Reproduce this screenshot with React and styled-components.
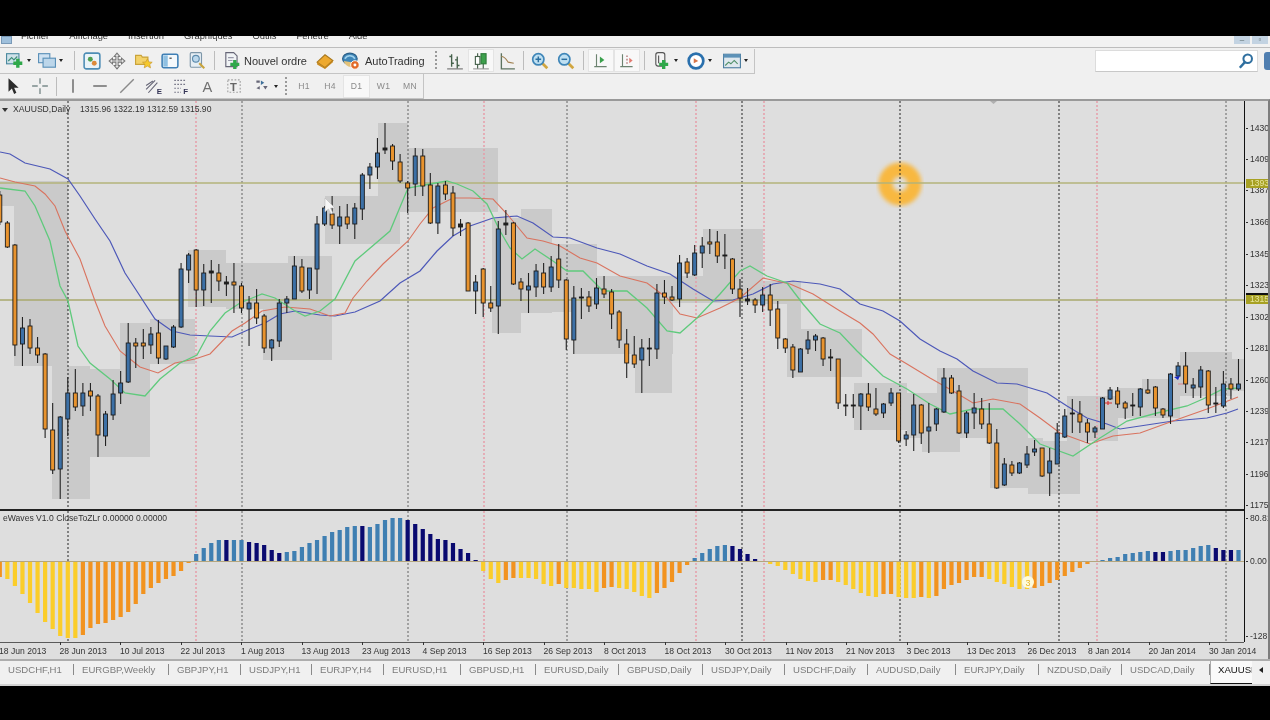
import React from "react";
import styled, { createGlobalStyle } from "styled-components";

// chart data, all in pixels of the chart

// [bodyTop, bodyBottom, wickTop, wickBottom, kind]
const candles = [
  [194,221,190,224,"o"],[222,246,220,247,"o"],[244,344,243,355,"o"],[327,343,316,365,"b"],[325,347,318,353,"o"],
  [347,354,336,362,"o"],[353,428,352,437,"o"],[429,469,402,473,"o"],[416,468,415,498,"b"],[392,418,376,435,"b"],
  [392,406,368,410,"o"],[392,405,382,415,"b"],[390,395,382,410,"o"],[395,434,393,456,"o"],[413,435,410,445,"b"],
  [393,414,379,419,"b"],[382,392,370,403,"b"],[342,381,322,382,"b"],[342,345,337,367,"o"],[342,345,328,358,"o"],
  [333,344,326,353,"b"],[332,357,319,363,"o"],[345,358,345,359,"b"],[326,346,324,347,"b"],[268,326,262,327,"b"],
  [254,269,252,282,"b"],[249,289,248,306,"o"],[272,289,263,305,"b"],[270,272,259,302,"d"],[272,280,263,290,"o"],
  [281,283,275,295,"d"],[281,284,262,312,"o"],[285,307,282,312,"o"],[302,308,295,345,"b"],[302,317,288,323,"o"],
  [315,347,313,352,"o"],[339,347,338,360,"b"],[302,340,298,346,"b"],[298,302,295,312,"b"],[265,298,255,298,"b"],
  [266,290,258,292,"o"],[267,289,267,298,"b"],[223,268,215,293,"b"],[207,223,205,225,"b"],[213,224,195,228,"o"],
  [216,225,205,243,"b"],[216,223,203,228,"o"],[207,223,202,238,"b"],[174,208,172,219,"b"],[166,174,162,188,"b"],
  [152,166,137,178,"b"],[147,149,122,153,"d"],[145,160,143,169,"o"],[161,180,153,182,"o"],[182,187,180,212,"o"],
  [155,183,147,195,"b"],[155,185,148,195,"o"],[184,222,172,223,"o"],[185,222,182,233,"b"],[184,193,180,199,"o"],
  [192,227,185,235,"o"],[223,226,218,235,"d"],[222,290,221,290,"o"],[281,290,274,313,"b"],[268,302,267,316,"o"],
  [302,307,285,311,"o"],[228,305,220,333,"b"],[222,224,209,234,"d"],[222,283,221,284,"o"],[281,288,277,300,"o"],
  [285,289,272,312,"b"],[270,286,263,296,"b"],[272,286,262,293,"o"],[266,286,255,291,"b"],[258,279,243,287,"o"],
  [279,338,278,349,"o"],[297,339,285,353,"b"],[296,297,287,318,"d"],[296,305,290,311,"o"],[287,303,277,308,"b"],
  [288,293,275,297,"o"],[291,313,288,328,"o"],[311,339,309,347,"o"],[343,362,328,377,"o"],[354,363,335,367,"o"],
  [347,359,338,392,"b"],[347,348,337,365,"d"],[292,348,283,358,"b"],[292,296,279,303,"o"],[296,299,285,300,"o"],
  [262,298,254,306,"b"],[261,272,257,277,"o"],[252,274,244,275,"b"],[245,252,236,267,"b"],[241,243,228,253,"o"],
  [241,255,230,262,"o"],[254,255,233,268,"d"],[258,288,257,293,"o"],[288,297,278,316,"o"],[298,300,287,304,"d"],
  [299,304,297,312,"o"],[294,304,286,311,"b"],[294,309,283,325,"o"],[308,337,300,348,"o"],[338,347,337,352,"o"],
  [346,369,343,377,"o"],[348,371,347,371,"b"],[339,348,330,353,"b"],[335,339,333,350,"b"],[337,358,336,365,"o"],
  [356,357,348,370,"d"],[358,402,358,408,"o"],[404,405,393,415,"d"],[404,405,393,417,"d"],[393,405,392,429,"b"],
  [393,406,382,410,"o"],[408,413,387,415,"o"],[403,412,402,417,"b"],[392,402,387,405,"b"],[392,440,392,442,"o"],
  [434,438,430,445,"b"],[404,434,393,450,"b"],[404,432,403,443,"o"],[426,430,402,452,"b"],[408,423,407,430,"b"],
  [377,411,367,412,"b"],[377,392,374,393,"o"],[390,432,384,433,"o"],[412,432,410,437,"b"],[407,412,392,428,"b"],
  [408,423,397,428,"o"],[423,442,402,443,"o"],[442,487,428,488,"o"],[463,484,457,485,"b"],[464,472,460,475,"o"],
  [462,472,461,473,"b"],[453,464,445,467,"b"],[448,451,439,455,"b"],[447,475,447,476,"o"],[460,472,447,495,"b"],
  [432,463,422,463,"b"],[415,436,408,437,"b"],[412,413,398,432,"d"],[413,421,400,432,"o"],[422,431,418,442,"o"],
  [427,431,425,437,"b"],[397,428,396,428,"b"],[389,398,386,399,"b"],[390,403,386,407,"o"],[402,407,400,418,"o"],
  [404,405,392,415,"d"],[388,406,387,415,"b"],[389,392,378,393,"o"],[386,407,385,415,"o"],[408,414,407,417,"o"],
  [373,415,372,423,"b"],[365,375,361,377,"b"],[365,383,351,392,"o"],[384,387,377,397,"b"],[369,386,365,397,"b"],
  [370,404,369,412,"o"],[402,403,386,412,"d"],[383,405,370,407,"b"],[383,388,377,398,"o"],[383,388,358,390,"b"],
];

const barX = (i) => -0.2 + 7.553 * i;

const blueLine = "0,151 10,153 25,162 50,168 68,178 80,195 95,218 110,240 125,272 140,295 155,318 172,330 190,334 210,335 232,336 250,328 265,322 280,313 295,310 320,314 335,315 355,311 380,300 400,282 420,270 437,250 453,235 470,225 493,217 517,215 533,222 553,236 570,237 597,247 620,253 647,265 670,273 693,288 713,300 733,299 753,293 773,283 793,280 820,283 840,288 860,303 883,310 900,320 920,338 940,350 957,358 973,370 997,382 1017,383 1047,392 1067,405 1087,417 1107,423 1120,428 1140,425 1173,420 1207,417 1227,412 1238,408";
const redLine = "0,177 15,181 35,185 45,193 55,205 65,230 80,258 95,300 105,325 120,350 140,366 158,372 175,362 195,358 210,353 232,330 245,322 262,310 285,306 310,308 330,315 345,312 353,297 367,280 383,263 408,240 420,223 433,207 453,197 470,197 493,198 507,213 527,237 543,240 560,245 580,257 597,262 620,275 647,282 667,297 680,313 697,317 720,307 740,297 763,277 790,283 813,293 840,310 860,322 873,333 890,353 907,363 930,377 953,390 973,402 993,398 1020,403 1040,417 1060,432 1090,443 1113,435 1140,432 1173,420 1207,408 1238,396";
const greenLine = "0,187 25,190 35,205 50,240 60,285 68,300 78,345 90,362 110,378 125,392 145,395 160,378 180,362 197,354 210,330 225,312 240,302 262,293 275,297 295,310 305,315 320,310 335,298 355,260 390,230 408,187 430,183 447,180 457,183 473,190 487,203 500,230 510,247 522,258 535,248 553,260 567,270 583,270 603,290 627,290 647,307 667,330 680,332 697,317 720,293 740,270 750,265 767,275 787,282 803,303 820,323 840,332 857,350 883,375 907,388 930,403 950,413 973,408 1003,408 1020,423 1040,443 1073,455 1100,437 1127,420 1157,412 1187,405 1203,398 1223,388 1240,387";

const zones = [
  [0,180,14,205],[14,180,68,365],[52,365,90,498],[68,368,150,456],[120,322,150,368],[150,318,195,363],
  [188,249,226,306],[226,262,290,308],[263,308,332,359],[288,255,332,310],[325,195,400,243],[378,122,408,195],
  [400,195,408,211],[408,147,498,211],[492,217,521,332],[521,208,552,312],[552,243,597,311],[575,310,623,353],
  [597,275,673,325],[623,325,673,353],[635,353,672,392],[672,275,703,302],[703,228,763,302],[763,280,787,303],
  [787,280,801,328],[787,328,862,376],[854,382,907,429],[907,392,937,437],[922,392,960,451],[937,367,1028,437],
  [990,437,1043,487],[1028,440,1080,493],[1067,395,1118,440],[1118,387,1142,417],[1142,378,1180,417],
  [1180,351,1232,395],[1232,358,1244,390],
];

const blackGrid = [[68,0.9],[242,0.6],[408,0.6],[567,0.6],[742,0.9],[900,0.9],[1059,0.9],[1226,0.6]];
const redGrid = [196,484,696,764,1097];

// one bar per candle: [y, colour]
const Y = "#fbcd2a", O = "#f2931f", B = "#3f7fb2", N = "#0a0a70";
const histogram = [
  [576,O],[578,Y],[585,Y],[593,Y],[602,Y],[612,Y],[621,Y],[628,Y],[635,Y],[637,Y],[637,Y],[634,O],[627,O],[623,O],[622,O],
  [619,O],[616,O],[611,O],[603,O],[593,O],[587,O],[582,O],[578,O],[575,O],[570,O],[562,O],
  [553,B],[547,B],[542,B],[539,B],[539,N],[539,B],[539,B],[541,N],[542,N],[544,N],[549,N],[552,N],[551,B],[550,B],[546,B],
  [542,B],[539,B],[535,B],[531,B],[529,B],[526,B],[525,B],[525,N],[526,B],[523,B],[519,B],[517,B],[517,B],[519,N],[523,N],
  [528,N],[533,N],[538,N],[539,N],[542,N],[548,N],[552,N],[559,N],
  [570,Y],[578,Y],[582,Y],[579,O],[577,O],[577,Y],[577,Y],[578,Y],[583,Y],[585,Y],[583,O],[587,Y],[587,Y],[588,Y],[588,Y],
  [591,Y],[587,O],[586,O],[587,Y],[588,Y],[591,Y],[595,Y],[597,Y],[592,O],[587,O],[581,O],[572,O],[564,O],
  [557,B],[552,B],[548,B],[545,B],[544,B],[545,N],[548,N],[553,N],[558,N],
  [560,Y],[563,Y],[565,Y],[569,Y],[573,Y],[578,Y],[580,Y],[581,Y],[579,O],[579,O],[581,Y],[584,Y],[588,Y],[592,Y],[595,Y],
  [596,Y],[593,O],[593,O],[596,Y],[597,Y],[597,Y],[596,O],[597,Y],[595,O],[588,O],[584,O],[582,O],[579,O],[576,O],[576,O],
  [578,Y],[581,Y],[583,Y],[586,Y],[588,Y],[588,Y],[587,O],[585,O],[582,O],[579,O],[575,O],[571,O],[567,O],[563,O],[561,O],
  [559,B],[557,B],[556,B],[553,B],[552,B],[551,B],[550,B],[551,N],[551,N],[550,B],[549,B],[549,B],[547,B],[545,B],[544,B],
  [547,N],[549,N],[549,N],[549,B],
];

const prices = [
  ["1430.55",127],["1409.15",158],["1387.75",189],["1366.35",221],["1345.00",253],["1323.60",284],["1302.20",316],
  ["1281.00",347],["1260.00",379],["1239.00",410],["1217.60",441],["1196.20",473],["1175.00",504],
];

const dates = ["18 Jun 2013","28 Jun 2013","10 Jul 2013","22 Jul 2013","1 Aug 2013","13 Aug 2013","23 Aug 2013","4 Sep 2013","16 Sep 2013","26 Sep 2013","8 Oct 2013","18 Oct 2013","30 Oct 2013","11 Nov 2013","21 Nov 2013","3 Dec 2013","13 Dec 2013","26 Dec 2013","8 Jan 2014","20 Jan 2014","30 Jan 2014"];

const tabs = [
  ["USDCHF,H1",74],["EURGBP,Weekly",95],["GBPJPY,H1",72],["USDJPY,H1",71],["EURJPY,H4",72],["EURUSD,H1",77],["GBPUSD,H1",75],
  ["EURUSD,Daily",83],["GBPUSD,Daily",84],["USDJPY,Daily",82],["USDCHF,Daily",83],["AUDUSD,Daily",88],["EURJPY,Daily",83],
  ["NZDUSD,Daily",83],["USDCAD,Daily",88],
];

const menus = ["Fichier","Affichage","Insertion","Graphiques","Outils","Fenêtre","Aide"];

// global

const GlobalStyle = createGlobalStyle`
  html, body { margin: 0; padding: 0; background: #000; }
`;

const Screen = styled.div`
  width: 1270px;
  height: 720px;
  background: #000;
  display: flex;
  flex-direction: column;
  overflow: hidden;
  font-family: "Liberation Sans", Arial, sans-serif;
`;

const Terminal = styled.div`
  margin-top: 36px;
  height: 649px;
  display: flex;
  flex-direction: column;
  background: #f0f0f0;
  filter: blur(0.5px);
`;

// menu

const MenuBar = styled.div`
  height: 11px;
  flex: none;
  display: flex;
  align-items: flex-end;
  overflow: hidden;
  background: #f2f2f2;
  border-bottom: 1px solid #bdbdbd;
  padding-left: 21px;
  gap: 20px;
  position: relative;
`;

const MenuItem = styled.span`
  font-size: 9.4px;
  line-height: 12px;
  margin-bottom: 5px;
  color: #333;
`;

const AppBadge = styled.i`
  position: absolute;
  left: 1px;
  top: 0;
  width: 9px;
  height: 6px;
  background: #9fc0dc;
  border: 1px solid #7a9ab8;
`;

const WinControls = styled.div`
  display: flex;
  gap: 2px;
  margin-left: auto;
  margin-right: 2px;
  align-self: flex-start;
`;

const WinButton = styled.span`
  width: 16px;
  height: 8px;
  background: #c3d3e2;
  color: #566;
  font-size: 8px;
  line-height: 8px;
  text-align: center;
`;

// toolbars

const ToolRow = styled.div`
  height: ${(p) => p.$h}px;
  flex: none;
  display: flex;
  align-items: center;
  background: #f0f0f0;
`;

const ToolGroup = styled.div`
  display: flex;
  align-items: center;
  height: 24px;
  padding-left: ${(p) => p.$pad || 0}px;
  border-right: 1px solid #c4c4c4;
  border-bottom: 1px solid #c4c4c4;
`;

const ToolButton = styled.div`
  width: ${(p) => p.$w || 26}px;
  height: 23px;
  flex: none;
  display: flex;
  align-items: center;
  justify-content: ${(p) => (p.$pl !== undefined ? "flex-start" : "center")};
  padding-left: ${(p) => p.$pl || 0}px;
  box-sizing: border-box;
  background: ${(p) => (p.$active ? "#f8f8f8" : "transparent")};
  border: 1px solid ${(p) => (p.$active ? "#e4e4e4" : "transparent")};
  color: #333;
  font-size: 11px;
  white-space: nowrap;
`;

const Period = styled(ToolButton)`
  font-size: 8.6px;
  color: #8a8a8a;
  letter-spacing: 0.3px;
`;

const Caret = styled.i`
  width: 0;
  height: 0;
  margin-left: 3px;
  border-left: 2.5px solid transparent;
  border-right: 2.5px solid transparent;
  border-top: 3px solid #222;
`;

const Sep = styled.i`
  width: 1px;
  height: 19px;
  flex: none;
  background: #bcbcbc;
  margin: 0 ${(p) => p.$m || 3}px;
`;

const Grip = styled.i`
  width: 2px;
  height: 19px;
  flex: none;
  margin: 0 ${(p) => p.$m || 3}px;
  background: repeating-linear-gradient(to bottom, #9a9a9a 0 2px, transparent 2px 4px);
`;

const Label = styled.span`
  margin-left: ${(p) => p.$ml}px;
`;

const SearchBox = styled.div`
  margin-left: auto;
  width: 163px;
  height: 22px;
  box-sizing: border-box;
  background: #fff;
  border: 1px solid #dcdcdc;
  border-bottom-color: #c8c8c8;
  display: flex;
  align-items: center;
  justify-content: flex-end;
  padding-right: 2px;
`;

const Shield = styled.i`
  width: 6px;
  height: 18px;
  margin-left: 6px;
  flex: none;
  background: #4f7eb0;
  border-radius: 3px 0 0 3px;
`;

const Ic = styled.svg.attrs({ viewBox: "0 0 16 16" })`
  width: 18px;
  height: 18px;
  flex: none;
  display: block;
`;

const Plus = ({ x = 8, y = 8 }) => (
  <path d={`M${x + 2} ${y}h3v2.5h2.5v3h-2.5v2.5h-3v-2.5h-2.5v-3h2.5z`} fill="#2fa84a" />
);

const icons = {
  newChart: (
    <>
      <rect x="0.5" y="1.5" width="11" height="9" fill="#cfe2ea" stroke="#4c8aa0" />
      <path d="M2 8l3-3 2 2 3-3" fill="none" stroke="#3f8f7a" />
      <Plus x={7} y={6} />
    </>
  ),
  profiles: (
    <>
      <rect x="0.5" y="1.5" width="10" height="8" fill="#cfe2f2" stroke="#5a90b8" />
      <rect x="4.5" y="5.5" width="11" height="8" fill="#bcd6ea" stroke="#5a90b8" />
    </>
  ),
  market: (
    <>
      <rect x="1" y="1" width="14" height="14" rx="2" fill="#eaf3f8" stroke="#4d8db5" strokeWidth="1.4" />
      <circle cx="6.5" cy="6.5" r="2.2" fill="#4fa04f" />
      <circle cx="10" cy="10" r="2.2" fill="#dc8a3a" />
    </>
  ),
  navigator: (
    <path d="M8 1l2.5 3H9v3h3V5.500l3 2.500-3 2.500V9H9v3h1.500L8 15l-2.500-3H7V9H4v1.500L1 8l3-2.500V7h3V4H5.500z" fill="#e4e4e4" stroke="#777" strokeWidth="0.9" />
  ),
  favorites: (
    <>
      <path d="M0.500 3h5l1 1.500h5V11h-11z" fill="#f3d26a" stroke="#c9a33a" />
      <path d="M11 6l1.300 2.800 3 .3-2.200 2 .7 3-2.800-1.600-2.800 1.600.7-3-2.200-2 3-.3z" fill="#f6c92c" stroke="#c8962a" strokeWidth="0.6" />
    </>
  ),
  terminal: (
    <>
      <rect x="1" y="2" width="14" height="12" rx="1.5" fill="#f4f8fb" stroke="#3f7fb5" strokeWidth="1.4" />
      <rect x="2" y="3" width="4" height="10" fill="#8fc0e2" />
      <rect x="7.500" y="5" width="2" height="1" fill="#333" />
    </>
  ),
  tester: (
    <>
      <rect x="2" y="0.500" width="10" height="13" rx="1" fill="#e6eef4" stroke="#7d96a8" />
      <circle cx="7" cy="6" r="3" fill="#bcd8ec" stroke="#5e8cad" />
      <path d="M10 10l4.500 4.500" stroke="#c9a33a" strokeWidth="1.800" />
    </>
  ),
  newOrder: (
    <>
      <path d="M2.500 0.500h7l3 3V13h-10z" fill="#f0f3f5" stroke="#667" />
      <path d="M4.500 5h5M4.500 7.500h4" stroke="#99a" />
      <Plus x={7} y={7} />
    </>
  ),
  editor: (
    <>
      <path d="M1 9l7-6.500 7 5-7 6.500z" fill="#eda92f" stroke="#a9781e" />
      <path d="M1 9v2l7 4 7-6V7.500l-7 6.500z" fill="#c98a1f" />
    </>
  ),
  autotrade: (
    <>
      <ellipse cx="7" cy="6" rx="6.500" ry="5" fill="#3f86b8" stroke="#2a5f88" />
      <path d="M2.500 6c2-3.500 7-3.500 9 0" fill="none" stroke="#9ed0ec" strokeWidth="1.400" />
      <path d="M1.500 8c1 4 5 5.500 7 5.500V9z" fill="#e3c27a" />
      <circle cx="11.500" cy="11.500" r="3.800" fill="#e26a28" stroke="#fff" strokeWidth="0.800" />
      <circle cx="11.500" cy="11.500" r="1.300" fill="#fff" />
    </>
  ),
  bars: (
    <g fill="none" strokeWidth="1.200">
      <path d="M5 2v11M3 4h2M5 10h2" stroke="#44604a" />
      <path d="M10 4v11M8 7h2M10 12h2" stroke="#44604a" />
      <path d="M1 15h14" stroke="#888" />
    </g>
  ),
  candle: (
    <g>
      <path d="M5 1v14M10 3v12" stroke="#44604a" />
      <rect x="3" y="4" width="4" height="7" fill="#fff" stroke="#44604a" />
      <rect x="8" y="1.500" width="4.500" height="9" fill="#3da04c" stroke="#2f7d3c" />
      <path d="M1 15h14" stroke="#999" />
    </g>
  ),
  line: (
    <g fill="none">
      <path d="M3 1v14h12" stroke="#5c7360" strokeWidth="1.200" />
      <path d="M3 4c3 0 4 2 6 5l5 1" stroke="#a08050" />
    </g>
  ),
  zoomIn: (
    <>
      <path d="M10 10l4.500 4.500" stroke="#d1a640" strokeWidth="2.400" />
      <circle cx="6.500" cy="6.500" r="5" fill="#bfe0f2" stroke="#3f86b8" strokeWidth="1.500" />
      <path d="M4 6.500h5M6.500 4v5" stroke="#2c6f9f" strokeWidth="1.300" />
    </>
  ),
  zoomOut: (
    <>
      <path d="M10 10l4.500 4.500" stroke="#d1a640" strokeWidth="2.400" />
      <circle cx="6.500" cy="6.500" r="5" fill="#bfe0f2" stroke="#3f86b8" strokeWidth="1.500" />
      <path d="M4 6.500h5" stroke="#2c6f9f" strokeWidth="1.300" />
    </>
  ),
  autoscroll: (
    <g>
      <path d="M4 2v11M2 13h11" stroke="#6c8370" strokeWidth="1" fill="none" />
      <path d="M7 4l4 3-4 3z" fill="#3aa04c" />
    </g>
  ),
  shift: (
    <g>
      <path d="M4 2v11M2 13h11" stroke="#6c8370" strokeWidth="1" fill="none" />
      <path d="M8 3v8" stroke="#a05a5a" strokeDasharray="1.500 1.500" />
      <path d="M10 5l3 2.500-3 2.500z" fill="#e27a70" />
    </g>
  ),
  indicators: (
    <>
      <rect x="2.500" y="0.500" width="8" height="12" rx="2" fill="#f4f4f4" stroke="#555" />
      <path d="M5 3v7" stroke="#555" />
      <Plus x={6} y={7} />
    </>
  ),
  clock: (
    <>
      <circle cx="8" cy="8" r="6.500" fill="#fff" stroke="#2a70ad" strokeWidth="2.400" />
      <path d="M6 5.500l4 2.500-4 2z" fill="#d7764a" />
    </>
  ),
  templates: (
    <>
      <rect x="0.500" y="2" width="15" height="12" fill="#dfe8ee" stroke="#4d7ea0" />
      <rect x="0.500" y="2" width="15" height="3" fill="#5d92b8" />
      <path d="M2 12l3-3 2 1.500 3-3 3 3" fill="none" stroke="#4f8f68" />
    </>
  ),
  cursor: <path d="M4 1v12l3-2.800L9 15l2-1-2-4.500h4z" fill="#2b2b2b" />,
  cross: <path d="M8 1v5M8 10v5M1 8h5M10 8h5" stroke="#7a8a8a" strokeWidth="1.200" />,
  vline: <path d="M8 2v12" stroke="#6a6a6a" strokeWidth="1.300" />,
  hline: <path d="M2 8h12" stroke="#6a6a6a" strokeWidth="1.300" />,
  trend: <path d="M2 14L14 2" stroke="#8a8a8a" strokeWidth="1.200" />,
  channel: (
    <>
      <path d="M1 11l8-8M3 14l8-9M1 7.500l6-4" stroke="#667" fill="none" />
      <text x="10.500" y="15" fontSize="7" fontWeight="700" fill="#335">E</text>
    </>
  ),
  fib: (
    <>
      <path d="M2 3h10M2 6.500h10M2 10h6M2 13.500h6" stroke="#778" strokeDasharray="1.500 1.200" />
      <text x="10" y="15.500" fontSize="7" fontWeight="700" fill="#335">F</text>
    </>
  ),
  textA: <text x="3" y="13" fontSize="13" fill="#707070">A</text>,
  textT: (
    <>
      <rect x="2.500" y="2.500" width="11" height="11" fill="none" stroke="#a0a0a0" strokeDasharray="1.500 1.500" />
      <text x="4.500" y="12" fontSize="10" fontWeight="700" fill="#666">T</text>
    </>
  ),
  arrows: (
    <>
      <path d="M3 3h3v2H3zM9 8l4 0-2 3zM3 10l3-2v3z" fill="#667" />
      <path d="M7 3l3 2-3 2z" fill="#3e6f9a" />
    </>
  ),
};

const Icon = ({ name }) => <Ic>{icons[name]}</Ic>;

// chart

const ChartArea = styled.div`
  flex: none;
  border-top: 2px solid #999;
  border-right: 2px solid #7d7d7d;
  background: #dedede;
`;

const PaneRow = styled.div`
  display: flex;
  height: ${(p) => p.$h}px;
`;

const Pane = styled.div`
  width: 1244px;
  flex: none;
  position: relative;
  overflow: hidden;
  background: #dedede;
`;

const PaneSvg = styled.svg`
  display: block;
  width: 1244px;
  height: 100%;
`;

const PaneTitle = styled.div`
  position: absolute;
  left: ${(p) => p.$l}px;
  top: ${(p) => p.$t}px;
  font-size: 8.6px;
  line-height: 11px;
  color: #333;
  white-space: pre;
`;

const Arrow = styled.i`
  position: absolute;
  left: 2px;
  top: 7px;
  width: 0;
  height: 0;
  border-left: 3px solid transparent;
  border-right: 3px solid transparent;
  border-top: 4px solid #333;
`;

const Axis = styled.div`
  flex: 1;
  position: relative;
  overflow: hidden;
  border-left: 1px solid #111;
`;

const AxisLabel = styled.span`
  position: absolute;
  left: 5px;
  font-size: 8.6px;
  line-height: 10px;
  color: #333;
  white-space: nowrap;
  &::before {
    content: "";
    position: absolute;
    left: -4px;
    top: 5px;
    width: 2px;
    height: 1px;
    background: #333;
  }
`;

const PriceTag = styled.span`
  position: absolute;
  left: 1px;
  width: 24px;
  height: 9px;
  padding-left: 4px;
  box-sizing: border-box;
  background: #a7a123;
  color: #e8e6a0;
  font-size: 8.6px;
  line-height: 9px;
  ${(p) => p.$dark && "box-shadow: 0 -2px 0 #111;"}
`;

const Divider = styled.div`
  height: 2px;
  width: 1244px;
  background: #222;
`;

const DateRow = styled.div`
  height: 17px;
  display: flex;
  box-sizing: border-box;
  overflow: hidden;
  background: linear-gradient(#5a5a5a, #5a5a5a) top left / 1244px 1px no-repeat;
`;

const DateCell = styled.span`
  flex: none;
  width: 60.5px;
  margin-left: ${(p) => (p.$first ? "-1px" : "0")};
  font-size: 8.6px;
  line-height: 18px;
  color: #333;
  white-space: nowrap;
  position: relative;
  &::before {
    content: "";
    position: absolute;
    left: 0;
    top: 0;
    width: 1px;
    height: 3px;
    background: #333;
  }
`;

// tabs

const TabBar = styled.div`
  height: 23px;
  flex: none;
  display: flex;
  align-items: stretch;
  border-top: 2px solid #adadad;
  border-bottom: 2px solid #d2d2d2;
  background: #f0f0f0;
  position: relative;
  overflow: hidden;
`;

const Tab = styled.div`
  width: ${(p) => p.$w}px;
  flex: none;
  box-sizing: border-box;
  padding-left: 8px;
  color: #7c7c7c;
  font-size: 9.6px;
  line-height: 17px;
  white-space: nowrap;
  &::after {
    content: "";
    float: right;
    width: 1px;
    height: 11px;
    margin-top: 3px;
    background: #8a8a8a;
  }
`;

const ActiveTab = styled.div`
  width: 42px;
  flex: none;
  overflow: hidden;
  padding-left: 7px;
  box-sizing: border-box;
  background: #fafafa;
  border-bottom: 1px solid #111;
  border-left: 1px solid #aaa;
  color: #111;
  font-size: 9.6px;
  line-height: 17px;
  white-space: nowrap;
`;

const TabArrow = styled.i`
  margin: 6px 0 0 7px;
  width: 0;
  height: 0;
  border-top: 3px solid transparent;
  border-bottom: 3px solid transparent;
  border-right: 4px solid #222;
`;

const GridLines = ({ y1, y2 }) => (
  <g>
    {blackGrid.map(([x, a]) => (
      <line key={x} x1={x} x2={x} y1={y1} y2={y2} stroke="#111" strokeOpacity={a} strokeDasharray="2 2" strokeWidth="1" />
    ))}
    {redGrid.map((x) => (
      <line key={x} x1={x} x2={x} y1={y1} y2={y2} stroke="#e79aa6" strokeDasharray="2 2" strokeWidth="1.400" />
    ))}
  </g>
);

const MainChart = () => (
  <PaneSvg viewBox="0 100 1244 408">
    <defs>
      <filter id="glow" x="-30%" y="-30%" width="160%" height="160%">
        <feGaussianBlur stdDeviation="2" />
      </filter>
    </defs>
    {zones.map(([a, b, c, d], i) => (
      <rect key={i} x={a} y={b} width={c - a} height={d - b} fill="#cacaca" />
    ))}
    <circle cx="900" cy="183" r="14.500" fill="none" stroke="#f8b840" strokeWidth="14" filter="url(#glow)" />
    <GridLines y1={100} y2={508} />
    <line x1="0" x2="1244" y1="182" y2="182" stroke="#b3b37a" strokeWidth="1.400" />
    <line x1="0" x2="1244" y1="299" y2="299" stroke="#a8a86c" strokeWidth="1.400" />
    <polyline points={blueLine} fill="none" stroke="#4d58b8" strokeWidth="1.200" />
    <polyline points={redLine} fill="none" stroke="#d9735f" strokeWidth="1.100" />
    <polyline points={greenLine} fill="none" stroke="#5fca7c" strokeWidth="1.300" />
    {candles.map(([t, b, h, l, k], i) => {
      const x = barX(i);
      return (
        <g key={i}>
          <line x1={x} x2={x} y1={h} y2={l} stroke="#222" strokeWidth="1.100" />
          <rect
            x={x - 2}
            y={t}
            width="4"
            height={Math.max(b - t, 1)}
            fill={k === "o" ? "#e8932e" : k === "b" ? "#3c70a6" : "#222"}
            stroke="#1b1b1b"
            strokeWidth="0.900"
          />
        </g>
      );
    })}
    <path d="M1105 402h7M1108 400v4" stroke="#d83030" strokeWidth="1.200" />
    <path d="M1174 376l6-1-2 4z" fill="#1a2ac8" />
    <path d="M1178 383h5" stroke="#d89098" strokeWidth="1.200" />
    <path d="M990 100h7l-3.500 3z" fill="#b0b0b0" />
    <path d="M325 197v14l3.500-3 2.500 5 2-1-2.500-5h4.500z" fill="#f6f6f6" stroke="#b0b0b0" strokeWidth="0.500" />
  </PaneSvg>
);

const SubChart = () => (
  <PaneSvg viewBox="0 510 1244 131">
    <GridLines y1={510} y2={641} />
    <line x1="0" x2="1244" y1="560.500" y2="560.500" stroke="#b4a67e" />
    {histogram.map(([y, c], i) => {
      const x = barX(i);
      const up = y < 560;
      return (
        <rect key={i} x={x - 2.100} y={up ? y : 561} width="4.200" height={up ? 560 - y : y - 561} fill={c} />
      );
    })}
    <circle cx="1028" cy="581" r="6" fill="#fdfbdc" />
    <text x="1028" y="584.500" fontSize="9" fill="#eab52a" textAnchor="middle" fontFamily="Liberation Sans">3</text>
  </PaneSvg>
);

export default function App() {
  return (
    <Screen>
      <GlobalStyle />
      <Terminal>
        <MenuBar>
          <AppBadge />
          {menus.map((m) => (
            <MenuItem key={m}>{m}</MenuItem>
          ))}
          <WinControls>
            <WinButton>–</WinButton>
            <WinButton>▫</WinButton>
          </WinControls>
        </MenuBar>

        <ToolRow $h={26}>
          <ToolGroup $pad={2}>
            <ToolButton $w={33} $pl={3}><Icon name="newChart" /><Caret /></ToolButton>
            <ToolButton $w={35} $pl={2}><Icon name="profiles" /><Caret /></ToolButton>
            <Sep $m={4} />
            <ToolButton $w={25}><Icon name="market" /></ToolButton>
            <ToolButton><Icon name="navigator" /></ToolButton>
            <ToolButton $w={27}><Icon name="favorites" /></ToolButton>
            <ToolButton><Icon name="terminal" /></ToolButton>
            <ToolButton $w={27}><Icon name="tester" /></ToolButton>
            <Sep $m={4} />
            <ToolButton $w={93} $pl={3}><Icon name="newOrder" /><Label $ml={3}>Nouvel ordre</Label></ToolButton>
            <ToolButton><Icon name="editor" /></ToolButton>
            <ToolButton $w={92} $pl={3}><Icon name="autotrade" /><Label $ml={5}>AutoTrading</Label></ToolButton>
            <Grip $m={5} />
            <ToolButton><Icon name="bars" /></ToolButton>
            <ToolButton $active><Icon name="candle" /></ToolButton>
            <ToolButton><Icon name="line" /></ToolButton>
            <Sep $m={3} />
            <ToolButton><Icon name="zoomIn" /></ToolButton>
            <ToolButton><Icon name="zoomOut" /></ToolButton>
            <Sep $m={4} />
            <ToolButton $active><Icon name="autoscroll" /></ToolButton>
            <ToolButton $active><Icon name="shift" /></ToolButton>
            <Sep $m={4} />
            <ToolButton $w={33} $pl={3}><Icon name="indicators" /><Caret /></ToolButton>
            <ToolButton $w={36} $pl={4}><Icon name="clock" /><Caret /></ToolButton>
            <ToolButton $w={36} $pl={4}><Icon name="templates" /><Caret /></ToolButton>
          </ToolGroup>
          <SearchBox>
            <Ic>
              <circle cx="9.500" cy="6" r="3.800" fill="#fff" stroke="#2f6f9f" strokeWidth="1.800" />
              <path d="M7 9l-4.500 5" stroke="#2f6f9f" strokeWidth="2.200" />
            </Ic>
          </SearchBox>
          <Shield />
        </ToolRow>

        <ToolRow $h={25}>
          <ToolGroup>
            <ToolButton><Icon name="cursor" /></ToolButton>
            <ToolButton $w={27}><Icon name="cross" /></ToolButton>
            <Sep $m={3} />
            <ToolButton><Icon name="vline" /></ToolButton>
            <ToolButton $w={27}><Icon name="hline" /></ToolButton>
            <ToolButton $w={27}><Icon name="trend" /></ToolButton>
            <ToolButton $w={27}><Icon name="channel" /></ToolButton>
            <ToolButton $w={27}><Icon name="fib" /></ToolButton>
            <ToolButton $w={27}><Icon name="textA" /></ToolButton>
            <ToolButton><Icon name="textT" /></ToolButton>
            <ToolButton $w={34} $pl={5}><Icon name="arrows" /><Caret /></ToolButton>
            <Grip $m={4} />
            <Period>H1</Period>
            <Period>H4</Period>
            <Period $active $w={27}>D1</Period>
            <Period $w={27}>W1</Period>
            <Period>MN</Period>
          </ToolGroup>
        </ToolRow>

        <ChartArea>
          <PaneRow $h={408}>
            <Pane>
              <MainChart />
              <Arrow />
              <PaneTitle $l={13} $t={3}>{"XAUUSD,Daily"}</PaneTitle>
              <PaneTitle $l={80} $t={3}>1315.96 1322.19 1312.59 1315.90</PaneTitle>
            </Pane>
            <Axis>
              {prices.map(([label, y]) => (
                <AxisLabel key={label} style={{ top: y - 105 }}>{label}</AxisLabel>
              ))}
              <PriceTag style={{ top: 78 }}>1393.50</PriceTag>
              <PriceTag $dark style={{ top: 194 }}>1315.90</PriceTag>
            </Axis>
          </PaneRow>
          <PaneRow $h={2}>
            <Divider />
            <Axis />
          </PaneRow>
          <PaneRow $h={131}>
            <Pane>
              <SubChart />
              <PaneTitle $l={3} $t={2}>eWaves V1.0 CloseToZLr 0.00000 0.00000</PaneTitle>
            </Pane>
            <Axis>
              <AxisLabel style={{ top: 2 }}>80.81</AxisLabel>
              <AxisLabel style={{ top: 45 }}>0.00</AxisLabel>
              <AxisLabel style={{ top: 120 }}>-128.32</AxisLabel>
            </Axis>
          </PaneRow>
          <DateRow>
            {dates.map((d, i) => (
              <DateCell key={d} $first={i === 0}>{d}</DateCell>
            ))}
          </DateRow>
        </ChartArea>

        <TabBar>
          {tabs.map(([name, w]) => (
            <Tab key={name} $w={w}>{name}</Tab>
          ))}
          <ActiveTab>XAUUSD,Daily</ActiveTab>
          <TabArrow />
        </TabBar>
      </Terminal>
    </Screen>
  );
}
